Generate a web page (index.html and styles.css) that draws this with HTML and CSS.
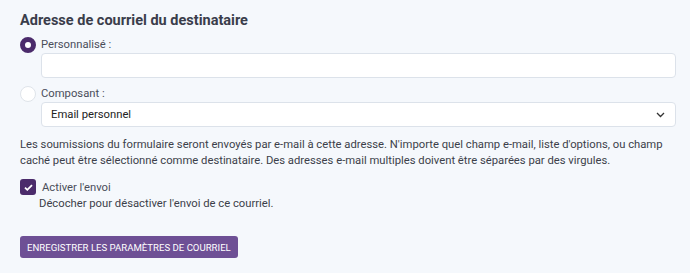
FILE: index.html
```html
<!DOCTYPE html>
<html lang="fr">
<head>
    <meta charset="UTF-8">
    <meta name="viewport" content="width=device-width, initial-scale=1.0">
    <title>Paramètres de courriel</title>
    <link rel="stylesheet" href="styles.css">
</head>
<body>
    <main class="panel">
        <h2 class="panel-title">Adresse de courriel du destinataire</h2>

        <div class="choice">
            <span class="radio checked"></span>
            <div class="choice-body">
                <label class="choice-label">Personnalisé :</label>
                <input class="field" type="text">
            </div>
        </div>

        <div class="choice">
            <span class="radio"></span>
            <div class="choice-body">
                <label class="choice-label">Composant :</label>
                <div class="field select">
                    <span>Email personnel</span>
                    <svg width="9" height="6" viewBox="0 0 9 6"><path d="M1 1l3.5 3.5L8 1" fill="none" stroke="#333" stroke-width="1.3"/></svg>
                </div>
            </div>
        </div>

        <p class="help">Les soumissions du formulaire seront envoyés par e-mail à cette adresse. N'importe quel champ e-mail, liste d'options, ou champ caché peut être sélectionné comme destinataire. Des adresses e-mail multiples doivent être séparées par des virgules.</p>

        <div class="check-row">
            <span class="checkbox">
                <svg width="9" height="7" viewBox="0 0 9 7"><path d="M1 3.6l2.3 2.2L8 1.1" fill="none" stroke="#fff" stroke-width="1.8"/></svg>
            </span>
            <span class="check-label">Activer l'envoi</span>
        </div>
        <p class="check-help">Décocher pour désactiver l'envoi de ce courriel.</p>

        <button class="save-button">Enregistrer les paramètres de courriel</button>
    </main>
</body>
</html>
```

FILE: styles.css
```css
body {
    margin: 0;
    padding: 0;
    background-color: #f5f8fc;
    font-family: Roboto, "Noto Sans", sans-serif;
    color: #3c3f4a;
}
.panel {
    padding: 11px 14px 0 20px;
}
.panel-title {
    font-size: 14.5px;
    font-weight: 700;
    margin: 0 0 6px;
    color: #3a3d4b;
    line-height: 20px;
}
.choice {
    display: flex;
    align-items: flex-start;
    margin-bottom: 8px;
}
.radio {
    width: 16px;
    height: 16px;
    box-sizing: border-box;
    border-radius: 50%;
    background-color: #fff;
    border: 1px solid #dfe4ea;
    margin-right: 5px;
    flex-shrink: 0;
}
.radio.checked {
    border: 5px solid #4b2b6b;
}
.choice-body {
    flex-grow: 1;
}
.choice-label {
    display: block;
    font-size: 11.25px;
    line-height: 16px;
    color: #4a4e5a;
}
.field {
    display: block;
    width: 100%;
    height: 25px;
    box-sizing: border-box;
    border: 1px solid #dce2ea;
    border-radius: 4px;
    background-color: #fff;
    margin: 0;
}
.select {
    display: flex;
    align-items: center;
    justify-content: space-between;
    padding: 0 10px 0 9px;
    font-size: 11.25px;
    color: #222;
}
.help {
    font-size: 11.25px;
    line-height: 16px;
    margin: 10px 0;
}
.check-row {
    display: flex;
    align-items: center;
    height: 16px;
}
.checkbox {
    width: 16px;
    height: 16px;
    border-radius: 3px;
    background-color: #4b2b6b;
    display: inline-flex;
    align-items: center;
    justify-content: center;
    margin-right: 6px;
}
.check-label {
    font-size: 11.25px;
    color: #4a4e5a;
}
.check-help {
    font-size: 11.25px;
    line-height: 16px;
    margin: 1px 0 0 19px;
}
.save-button {
    margin-top: 24px;
    padding: 0 7px;
    height: 22px;
    border: none;
    border-radius: 3px;
    background-color: #6e5095;
    color: white;
    font-family: inherit;
    font-size: 9.6px;
    text-transform: uppercase;
}
```
